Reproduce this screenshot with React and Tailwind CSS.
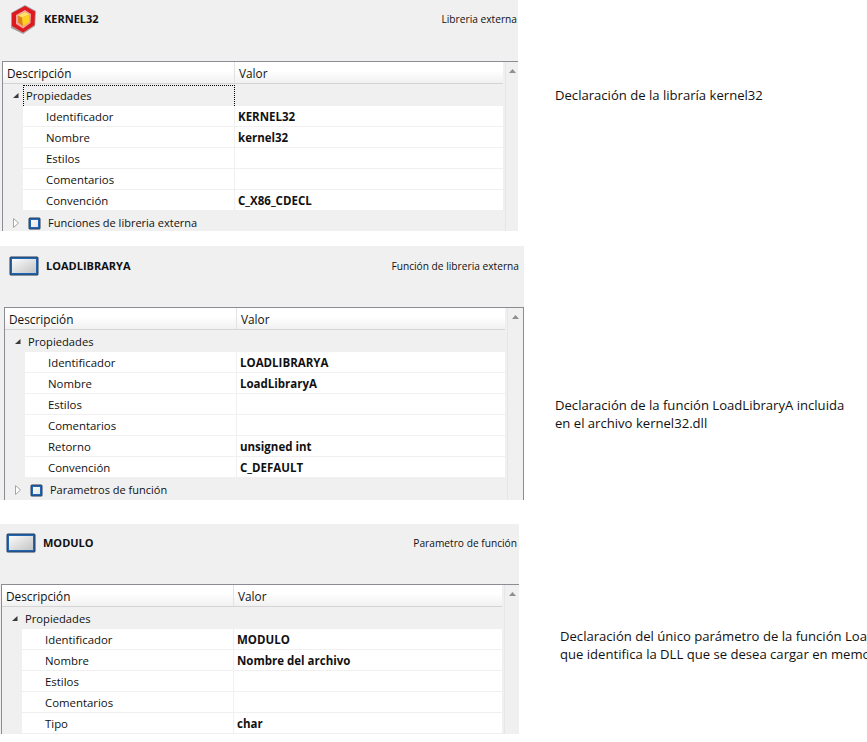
const FONT = { fontFamily: '"Open Sans", "Noto Sans", sans-serif' };

// Red hexagon with a yellow cube, the library icon
function CubeIcon() {
  return (
    <svg width="28" height="31" viewBox="0 0 28 31" className="shrink-0">
      <path d="M2 9 L16 1 L27 7 L26 22 L14 30 L2 24 Z" fill="#8a7a7a" opacity="0.7" />
      <path d="M3 9 L16 2 L26 7.500 L25.500 21 L14 28.500 L3 22 Z" fill="#dd1a20" />
      <path d="M7 11 L16 6 L22 10 L21.500 19 L14 24.500 L7 20 Z" fill="#f3a6a0" />
      <path d="M9 11.500 L16 8 L20.500 10.500 L20 18 L14 22.500 L9 18.500 Z" fill="#e0801c" />
      <path d="M13 13.500 L20.500 10.500 L20 18 L14 22.500 Z" fill="#ffd21f" />
      <path d="M9 11.500 L16 8 L20.500 10.500 L13 13.500 Z" fill="#ffe36a" />
    </svg>
  );
}

// Blue framed rectangle used for functions and parameters
function BoxIcon({ gradientId, width = 30, height = 20, endColor = "#c4c4c4" }) {
  return (
    <svg width={width} height={height} viewBox={`0 0 ${width} ${height}`} className="shrink-0">
      <defs>
        <linearGradient id={gradientId} x1="0" y1="0" x2="1" y2="1">
          <stop offset="0" stopColor="#fbfbfb" />
          <stop offset="1" stopColor={endColor} />
        </linearGradient>
      </defs>
      <rect x="0.500" y="0.500" width={width - 1} height={height - 1} rx="1.500" fill="#2b3f57" />
      <rect x="1.500" y="1.500" width={width - 3} height={height - 3} fill="#1f66b5" />
      <rect x="3" y="3" width={width - 6} height={height - 6} fill={`url(#${gradientId})`} />
    </svg>
  );
}

function ExpandedArrow() {
  return (
    <svg width="7" height="7" viewBox="0 0 7 7">
      <path d="M6.500 1 L6.500 6 L1 6 Z" fill="#3a3a3a" />
    </svg>
  );
}

function CollapsedArrow() {
  return (
    <svg width="6" height="10" viewBox="0 0 6 10">
      <path d="M0.500 0.500 L5.500 5 L0.500 9.500 Z" fill="#ffffff" stroke="#a6a6a6" />
    </svg>
  );
}

function PropertyRow({ label, value }) {
  return (
    <div className="flex h-[21px]">
      <div className="w-[20px] shrink-0" />
      <div className="flex flex-1 bg-white border-b border-[#f0f0f0]">
        <div className="w-[211px] shrink-0 pl-[23px] leading-[22px] text-[11.4px]">{label}</div>
        <div className="flex-1 border-l border-[#f0f0f0] pl-[3px] leading-[22px] font-bold text-[11.5px]">{value}</div>
      </div>
    </div>
  );
}

function PropertyTable({ rows, childLabel, childIcon, focused, rightBorder, childHeight }) {
  return (
    <div className={`flex border-t border-l border-[#8c8c93] ${rightBorder ? "border-r" : ""}`}>
      <div className="w-[500px] shrink-0">
        <div className="flex h-[22px] border-b border-[#d5d5d5] bg-gradient-to-b from-white from-40% to-[#f1f1f1] pr-[1px] text-[11.8px]">
          <div className="w-[231px] shrink-0 pl-[4px] leading-[23px]">Descripción</div>
          <div className="flex-1 border-l border-[#e2e2e2] pl-[4px] leading-[23px]">Valor</div>
        </div>
        <div className="flex h-[22px] items-start">
          <div className="w-[20px] h-[22px] shrink-0 pl-[9px] flex items-center">
            <ExpandedArrow />
          </div>
          <div
            className={`w-[212px] shrink-0 h-[21px] mt-[1px] pl-[2px] leading-[20px] text-[11.2px] border border-b-0 border-dotted ${
              focused ? "border-black" : "border-transparent"
            }`}
          >
            Propiedades
          </div>
        </div>
        {rows.map(([label, value]) => (
          <PropertyRow key={label} label={label} value={value} />
        ))}
        {childLabel && (
          <div className={`flex ${childHeight}`}>
            <div className="w-[25px] shrink-0 pl-[10px] pt-[7px]">
              <CollapsedArrow />
            </div>
            <div className="pt-[6px]">{childIcon}</div>
            <span className="pl-[7px] pt-[4px] text-[11px] leading-[16px]">{childLabel}</span>
          </div>
        )}
      </div>
      <div className="flex-1 border-l border-[#e6e6e6] ml-[2px] flex justify-center pt-[7px]">
        <svg width="7" height="4" viewBox="0 0 7 4">
          <path d="M3.500 0 L7 4 L0 4 Z" fill="#8f8f8f" />
        </svg>
      </div>
    </div>
  );
}

function Panel({ className, headClass, tableClass, icon, title, kind, children }) {
  return (
    <div className={`bg-[#f0f0f0] shrink-0 text-[#111] ${className}`}>
      <div className={`flex items-center ${headClass}`}>
        {icon}
        <span className="font-bold text-[11px]">{title}</span>
        <span className="ml-auto pt-[1px] text-[10.2px]">{kind}</span>
      </div>
      <div className={tableClass}>{children}</div>
    </div>
  );
}

export default function App() {
  return (
    <div className="w-[867px] h-[742px] overflow-hidden bg-white text-[#111]" style={FONT}>
      {/* Library */}
      <section className="flex">
        <Panel
          className="w-[518px] h-[231px] overflow-hidden"
          headClass="h-[61px] pb-[23px] pl-[9px] pr-[1px] gap-[7px]"
          tableClass="pl-[2px]"
          icon={<CubeIcon />}
          title="KERNEL32"
          kind="Libreria externa"
        >
          <PropertyTable
            focused
            rows={[
              ["Identificador", "KERNEL32"],
              ["Nombre", "kernel32"],
              ["Estilos", ""],
              ["Comentarios", ""],
              ["Convención", "C_X86_CDECL"],
            ]}
            childLabel="Funciones de libreria externa"
            childIcon={<BoxIcon gradientId="box-a" width={13} height={13} endColor="#e6e6e6" />}
            childHeight="h-[20px]"
          />
        </Panel>
        <p className="ml-[37px] mt-[86px] text-[13.1px] leading-[18px] whitespace-nowrap">
          Declaración de la libraría kernel32
        </p>
      </section>

      {/* Function */}
      <section className="flex mt-[15px]">
        <Panel
          className="w-[524px]"
          headClass="h-[61px] pb-[21px] pl-[9px] pr-[5px] gap-[7px]"
          tableClass="pl-[4px]"
          icon={<BoxIcon gradientId="box-b" />}
          title="LOADLIBRARYA"
          kind="Función de libreria externa"
        >
          <PropertyTable
            rightBorder
            rows={[
              ["Identificador", "LOADLIBRARYA"],
              ["Nombre", "LoadLibraryA"],
              ["Estilos", ""],
              ["Comentarios", ""],
              ["Retorno", "unsigned int"],
              ["Convención", "C_DEFAULT"],
            ]}
            childLabel="Parametros de función"
            childIcon={<BoxIcon gradientId="box-c" width={13} height={13} endColor="#e6e6e6" />}
            childHeight="h-[22px]"
          />
        </Panel>
        <p className="ml-[31px] mt-[150px] text-[13.1px] leading-[18px] whitespace-nowrap">
          Declaración de la función LoadLibraryA incluida
          <br />
          en el archivo kernel32.dll
        </p>
      </section>

      {/* Parameter */}
      <section className="flex mt-[24px]">
        <Panel
          className="w-[519px]"
          headClass="h-[60px] pb-[22px] pl-[6px] pr-[2px] gap-[7px]"
          tableClass="pl-[1px]"
          icon={<BoxIcon gradientId="box-d" />}
          title="MODULO"
          kind="Parametro de función"
        >
          <PropertyTable
            rows={[
              ["Identificador", "MODULO"],
              ["Nombre", "Nombre del archivo"],
              ["Estilos", ""],
              ["Comentarios", ""],
              ["Tipo", "char"],
            ]}
          />
        </Panel>
        <p className="ml-[41px] mt-[103px] text-[13.1px] leading-[18px] whitespace-nowrap">
          Declaración del único parámetro de la función LoadLibraryA
          <br />
          que identifica la DLL que se desea cargar en memoria
        </p>
      </section>
    </div>
  );
}
